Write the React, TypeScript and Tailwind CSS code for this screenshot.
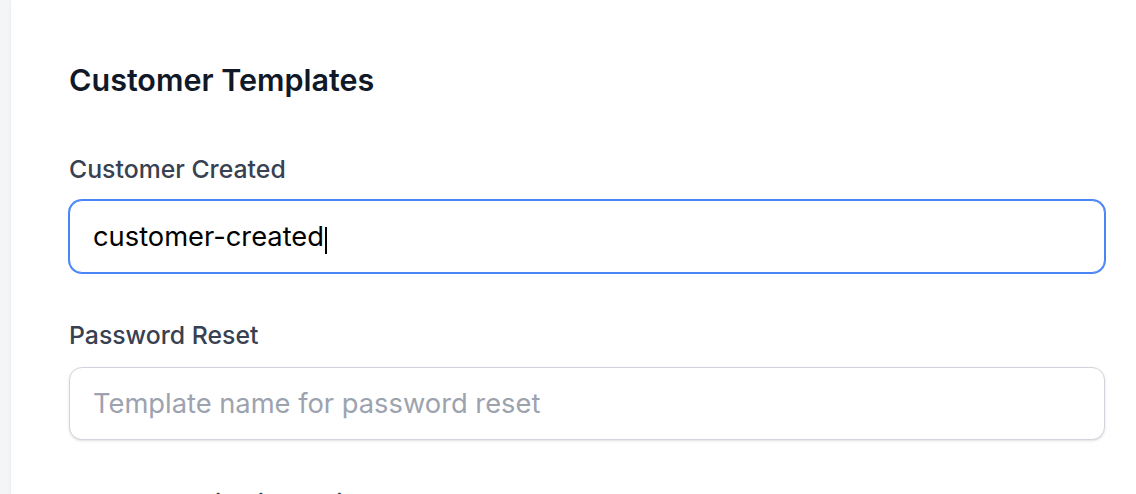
export default function App() {
  return (
    <div
      className="min-h-screen h-[494px] overflow-hidden bg-[#f4f5f6] pl-[11px]"
      style={{ fontFamily: "Inter, 'Noto Sans', sans-serif" }}
    >
      <div className="h-full bg-white pl-[58px] pr-[32px] pt-[61px] shadow-[0_1px_3px_rgba(0,0,0,0.08)] w-[1200px]">
        <div className="w-[1036px]">
          <h2 className="text-[30.5px] leading-[38px] font-semibold text-[#111827]">
            Customer Templates
          </h2>

          <div className="mt-[54px]">
            <label className="block text-[24.8px] leading-[32px] font-medium text-[#374151]">
              Customer Created
            </label>
            <div className="relative mt-[15px]">
              <input
                type="text"
                readOnly
                value="customer-created"
                className="block h-[73px] w-full rounded-[13px] border border-[#4a85f6] bg-white px-[23px] text-[27.3px] text-black outline-none ring-1 ring-[#4a85f6] caret-transparent"
              />
              <span className="absolute left-[256px] top-[27px] h-[27px] w-[2px] bg-black" />
            </div>
          </div>

          <div className="mt-[46px]">
            <label className="block text-[24.8px] leading-[32px] font-medium text-[#374151]">
              Password Reset
            </label>
            <input
              type="text"
              placeholder="Template name for password reset"
              className="mt-[16px] block h-[73px] w-full rounded-[13px] border border-[#d1d5db] bg-white px-[23px] text-[27.3px] text-black shadow-sm outline-none placeholder:text-[#9ca3af]"
            />
          </div>

          <div className="mt-[47px]">
            <label className="block text-[24.8px] leading-[32px] font-medium text-[#374151]">
              Account Activation Invite
            </label>
            <input
              type="text"
              placeholder="Template name for account activation"
              className="mt-[16px] block h-[73px] w-full rounded-[13px] border border-[#d1d5db] bg-white px-[23px] text-[27.3px] text-black shadow-sm outline-none placeholder:text-[#9ca3af]"
            />
          </div>
        </div>
      </div>
    </div>
  );
}
